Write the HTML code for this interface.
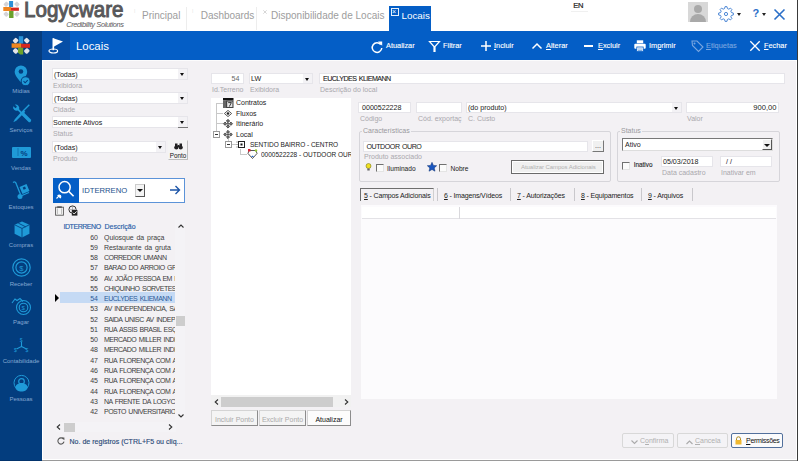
<!DOCTYPE html>
<html><head><meta charset="utf-8">
<style>
*{margin:0;padding:0;box-sizing:border-box}
html,body{width:798px;height:461px;overflow:hidden;background:#f3f1f4;font-family:"Liberation Sans",sans-serif;position:relative}
.a{position:absolute}
.t{position:absolute;white-space:nowrap;line-height:1}
svg{position:absolute;overflow:visible}
#hdr{left:0;top:0;width:798px;height:31px;background:#fff}
#bar{left:0;top:31px;width:797px;height:29px;background:#045ec6}
#bar1{left:0;top:31px;width:42px;height:29px;background:#053c7e}
#bar2{left:42px;top:31px;width:28px;height:29px;background:#064ea6}
#side{left:0;top:60px;width:42px;height:401px;background:#033d7e;border-bottom:1px solid #02336c}
#rb{left:797px;top:0;width:1px;height:461px;background:#3a3a3a}
#rw{left:796px;top:60px;width:1px;height:400px;background:#fff}
#bw{left:42px;top:459px;width:755px;height:1px;background:#fff}
#bg{left:42px;top:460px;width:755px;height:1px;background:#9a9a9a}
#tl{left:42px;top:60px;width:755px;height:1px;background:#fcfcfd}
.box{position:absolute;background:#fff;border:1px solid #e6e5ea}
.lbl{position:absolute;white-space:nowrap;line-height:1;font-size:7px;color:#a9a8ad}
.val{position:absolute;white-space:nowrap;line-height:1;font-size:7.1px;color:#222;margin-top:0.5px}
.dd{position:absolute;width:9px;background:#f3f2f5}
.dd:after{content:"";position:absolute;left:2.2px;top:50%;margin-top:-1px;border-left:2.7px solid transparent;border-right:2.7px solid transparent;border-top:3px solid #111}
.tb{position:absolute;white-space:nowrap;line-height:1;font-size:8px;color:#fff;-webkit-text-stroke:0.12px currentColor;transform:scaleX(0.92);transform-origin:0 0}
.tb u{text-decoration:underline}
.sl{position:absolute;left:0;width:42px;text-align:center;font-size:6px;color:#86a8d2;line-height:1}
.row{position:absolute;left:60px;width:115px;height:10px;font-size:7px;color:#3e3e3e;line-height:10px}
.row .n{position:absolute;right:77px;top:0}
.row .d{position:absolute;left:44px;top:0;white-space:nowrap;overflow:hidden;width:71px;letter-spacing:-0.5px;word-spacing:1px}
.row .d.lc{letter-spacing:-0.05px}
.btn{position:absolute;background:#f4f4f4;border:1px solid #d4d4d4;border-right-color:#8c8c8c;border-bottom-color:#8c8c8c;font-size:7px;text-align:center;line-height:13px;color:#aaa}
.tab{position:absolute;white-space:nowrap;line-height:1;font-size:7px;color:#222;letter-spacing:-0.15px}
.tsep{position:absolute;width:1px;background:#c9c8cc}
</style></head><body>
<div id="hdr" class="a"></div>
<div id="bar" class="a"></div>
<div id="bar1" class="a"></div>
<div id="bar2" class="a"></div>
<div id="side" class="a"></div>
<div id="tl" class="a"></div>
<div class="a" style="left:42px;top:60px;width:1px;height:400px;background:#fff"></div>
<div id="rb" class="a"></div>
<div id="rw" class="a"></div>
<div id="bw" class="a"></div>
<div id="bg" class="a"></div>

<!-- HEADER -->
<svg style="left:2px;top:0" width="20" height="20" viewBox="0 0 20 20">
 <g fill="#d4d4d8"><rect x="2.2" y="2" width="4" height="4.4" rx="1" transform="rotate(45 4.2 4.2)"/><rect x="13" y="2" width="4" height="4.4" rx="1" transform="rotate(-45 15 4.2)"/><rect x="2.2" y="12" width="4" height="4.4" rx="1" transform="rotate(-45 4.2 14.2)"/><rect x="13" y="12" width="4" height="4.4" rx="1" transform="rotate(45 15 14.2)"/></g>
 <rect x="7.1" y="1" width="4" height="6" fill="#2b8fd6"/>
 <rect x="1.3" y="7" width="7.8" height="4" fill="#f08620"/>
 <rect x="8.9" y="7.6" width="8" height="3.2" fill="#d8281f"/>
 <rect x="7.1" y="11" width="4.4" height="7" fill="#6aa12c"/>
</svg>
<div class="t" style="left:24px;top:-1.2px;font-size:22px;color:#58585a;-webkit-text-stroke:1px #58585a;transform:scaleX(0.935);transform-origin:0 0">Logycware</div>
<div class="t" style="left:66.2px;top:20.5px;font-size:7.4px;font-style:italic;color:#5a5a5c;letter-spacing:-0.36px">Credibility Solutions</div>

<div class="t" style="left:134px;top:9px;font-size:5px;color:#ccc">⁞</div>
<div class="t" style="left:142px;top:11px;font-size:10px;color:#9d9d9d">Principal</div>
<div class="a" style="left:186px;top:7px;width:1px;height:23px;background:#ededed"></div>
<div class="t" style="left:192px;top:9px;font-size:5px;color:#ccc">⁞</div>
<div class="t" style="left:200.8px;top:11px;font-size:10px;color:#9d9d9d;letter-spacing:-0.05px">Dashboards</div>
<div class="a" style="left:256px;top:7px;width:1px;height:23px;background:#ededed"></div>
<svg style="left:262.5px;top:10px" width="4" height="4" viewBox="0 0 4 4"><path d="M0.3 0.3l3.4 3.4M3.7 0.3L0.3 3.7" stroke="#c4c4c4" stroke-width="0.7"/></svg>
<div class="t" style="left:271px;top:11px;font-size:10px;color:#9d9d9d">Disponibilidade de Locais</div>
<div class="a" style="left:389px;top:6px;width:42px;height:25px;background:#045ec6"></div>
<div class="a" style="left:391px;top:8px;width:8px;height:8px;border:1px solid #e8f0fb"></div>
<div class="t" style="left:392px;top:8px;font-size:7px;color:#fff">×</div>
<div class="t" style="left:401.5px;top:11px;font-size:9.8px;color:#fff">Locais</div>
<div class="t" style="left:573.3px;top:1.5px;font-size:7.6px;color:#222;letter-spacing:-0.4px;-webkit-text-stroke:0.2px #222">EN</div>
<div class="a" style="left:571px;top:11px;width:17px;height:1px;background:#f0f0f0"></div>

<!-- avatar -->
<div class="a" style="left:688px;top:2px;width:20px;height:20px;background:#d8d8d8;overflow:hidden">
 <div class="a" style="left:6px;top:3px;width:8px;height:8px;border-radius:50%;background:#a9a9a9"></div>
 <div class="a" style="left:2px;top:12px;width:16px;height:12px;border-radius:8px 8px 0 0;background:#a9a9a9"></div>
</div>
<!-- gear -->
<svg style="left:718.3px;top:6px" width="16" height="16" viewBox="0 0 16 16"><path d="M7.01 0.67 L8.99 0.67 L9.44 2.59 L10.81 3.16 L12.49 2.12 L13.88 3.51 L12.84 5.19 L13.41 6.56 L15.33 7.01 L15.33 8.99 L13.41 9.44 L12.84 10.81 L13.88 12.49 L12.49 13.88 L10.81 12.84 L9.44 13.41 L8.99 15.33 L7.01 15.33 L6.56 13.41 L5.19 12.84 L3.51 13.88 L2.12 12.49 L3.16 10.81 L2.59 9.44 L0.67 8.99 L0.67 7.01 L2.59 6.56 L3.16 5.19 L2.12 3.51 L3.51 2.12 L5.19 3.16 L6.56 2.59Z" fill="none" stroke="#3a7ad0" stroke-width="0.9" stroke-linejoin="round"/><circle cx="8" cy="8" r="1.6" fill="none" stroke="#3a7ad0" stroke-width="0.9"/></svg>
<div class="a" style="left:737px;top:13px;border-left:2.5px solid transparent;border-right:2.5px solid transparent;border-top:3px solid #222"></div>
<div class="t" style="left:752.5px;top:8px;font-size:11px;font-weight:bold;color:#2b6fc8">?</div>
<div class="a" style="left:762px;top:13px;border-left:2.5px solid transparent;border-right:2.5px solid transparent;border-top:3px solid #222"></div>
<svg style="left:774px;top:9px" width="11" height="11" viewBox="0 0 11 11"><path d="M0.5 0.5L10.5 10.5M10.5 0.5L0.5 10.5" stroke="#2b6fc8" stroke-width="1.6"/></svg>

<!-- TITLE BAR -->
<svg style="left:10px;top:35px" width="22" height="21" viewBox="0 0 22 21">
 <g fill="#e4e4e8"><rect x="3.4" y="3.2" width="4.4" height="4.8" rx="1.2" transform="rotate(45 5.6 5.6)"/><rect x="14.6" y="3.2" width="4.4" height="4.8" rx="1.2" transform="rotate(-45 16.8 5.6)"/><rect x="3.4" y="13.6" width="4.4" height="4.8" rx="1.2" transform="rotate(-45 5.6 16)"/><rect x="14.6" y="13.6" width="4.4" height="4.8" rx="1.2" transform="rotate(45 16.8 16)"/></g>
 <rect x="8.8" y="1.2" width="4.4" height="7.4" fill="#2b93d8"/>
 <rect x="1.6" y="8.4" width="9.8" height="4.4" fill="#f0861e"/>
 <rect x="11.2" y="8.8" width="8.8" height="4" fill="#d9261c"/>
 <path d="M8 12.8h5.2v6.8H10l-2-2z" fill="#6fa22a"/>
</svg>
<svg style="left:48px;top:37px" width="18" height="17" viewBox="0 0 18 17">
 <path d="M5.3 1.2v12" stroke="#fff" stroke-width="1.6"/>
 <path d="M5.3 1.2L15 4.5 5.3 10z" fill="#fff"/>
 <ellipse cx="5.3" cy="14" rx="4.3" ry="2" fill="none" stroke="#fff" stroke-width="1.2"/>
</svg>
<div class="t" style="left:76px;top:40.5px;font-size:11.4px;color:#fff">Locais</div>

<!-- toolbar -->
<svg style="left:370.5px;top:40.5px" width="12" height="12" viewBox="0 0 12 12"><path d="M9.8 3.6A4.8 4.8 0 1 0 10.8 7" fill="none" stroke="#fff" stroke-width="1.5"/><path d="M7 0.6h4.2v4.2z" fill="#fff"/></svg>
<div class="tb" style="left:386px;top:41.5px">Atualizar</div>
<svg style="left:429px;top:41px" width="11" height="11" viewBox="0 0 11 11"><path d="M0.5 0.5h10L6 5.5v5H5v-5z" fill="none" stroke="#fff" stroke-width="1.2"/></svg>
<div class="tb" style="left:443px;top:41.5px">Filtrar</div>
<svg style="left:481px;top:41px" width="10" height="10" viewBox="0 0 10 10"><path d="M5 0v10M0 5h10" stroke="#fff" stroke-width="1.5"/></svg>
<div class="tb" style="left:494px;top:41.5px"><u>I</u>ncluir</div>
<svg style="left:532px;top:43px" width="10" height="6" viewBox="0 0 10 6"><path d="M0.5 5.5L5 1l4.5 4.5" fill="none" stroke="#fff" stroke-width="1.5"/></svg>
<div class="tb" style="left:546px;top:41.5px"><u>A</u>lterar</div>
<div class="a" style="left:584px;top:45px;width:9px;height:1.5px;background:#fff"></div>
<div class="tb" style="left:598px;top:41.5px"><u>E</u>xcluir</div>
<svg style="left:634px;top:40px" width="12" height="12" viewBox="0 0 12 12"><rect x="2.8" y="0.3" width="6.4" height="3" fill="#fff"/><rect x="0.3" y="3.8" width="11.4" height="5" rx="1" fill="#fff"/><rect x="2.8" y="7" width="6.4" height="4.6" fill="#fff" stroke="#045ec6" stroke-width="0.8"/><path d="M4 9h4M4 10.5h4" stroke="#045ec6" stroke-width="0.5"/></svg>
<div class="tb" style="left:649px;top:41.5px">Im<u>p</u>rimir</div>
<svg style="left:691px;top:40px" width="13" height="12" viewBox="0 0 13 12"><path d="M1 1h5l6 6-4.5 4.5-6-6z" fill="none" stroke="#7aa6e0" stroke-width="1.1"/><circle cx="3.5" cy="3.5" r="1" fill="#7aa6e0"/></svg>
<div class="tb" style="left:706px;top:41.5px;color:#7aa6e0"><u>E</u>tiquetas</div>
<svg style="left:750px;top:41px" width="10" height="10" viewBox="0 0 10 10"><path d="M0.3 0.3l9.4 9.4M9.7 0.3l-9.4 9.4" stroke="#fff" stroke-width="1.3"/></svg>
<div class="tb" style="left:764px;top:41.5px"><u>F</u>echar</div>

<!-- SIDEBAR -->
<!-- sidebar icons -->
<svg style="left:13.5px;top:65px" width="17" height="22" viewBox="0 0 16 21"><path d="M6.5 0.5a6 6 0 0 1 6 6c0 4-6 10-6 10s-6-6-6-10a6 6 0 0 1 6-6z" fill="#1f9ad8"/><circle cx="6.5" cy="6.2" r="2.2" fill="#033d7e"/><circle cx="11" cy="15.5" r="4.3" fill="#1f9ad8" stroke="#033d7e" stroke-width="1"/><path d="M9 15.5l1.5 1.5 2.5-2.5" fill="none" stroke="#033d7e" stroke-width="1"/></svg>
<svg style="left:12px;top:104px" width="19" height="19" viewBox="0 0 19 19"><path d="M1.2 2.2a3.6 3.6 0 0 0 4.6 4.4L16.5 17.3l1.3-1.3L7.1 5.3A3.6 3.6 0 0 0 2.8 0.6L5 2.8 3.6 4.2z" fill="#1f9ad8"/><path d="M17.8 1.2l-1-1-5.5 5.5 1 1zM11.3 5.7l2 2-9 9-3 1.5 1.5-3z" fill="#1f9ad8"/><path d="M10.5 9.5l7 7" stroke="#1f9ad8" stroke-width="3.2" stroke-linecap="round"/></svg>
<svg style="left:12px;top:147px" width="19" height="11" viewBox="0 0 19 11"><rect x="0" y="0" width="19" height="11" rx="1" fill="#1f9ad8"/><path d="M6 1.5v8" stroke="#033d7e" stroke-width="0.8" stroke-dasharray="1 1"/><text x="8.5" y="8.8" font-family="Liberation Sans" font-size="8" font-weight="bold" fill="#033d7e">%</text></svg>
<svg style="left:12px;top:181px" width="18" height="19" viewBox="0 0 18 19"><path d="M1 1.5c2-1.5 3 0 3.5 2l4 10" fill="none" stroke="#1f9ad8" stroke-width="1.3"/><circle cx="8" cy="15.5" r="2.5" fill="#1f9ad8"/><path d="M7.5 6l7-3 3 7-7 3z" fill="#1f9ad8"/><rect x="11" y="6" width="2.5" height="2.5" fill="#033d7e" transform="rotate(-22 12 7)"/><path d="M10 14.5l7-3" stroke="#1f9ad8" stroke-width="1.2"/></svg>
<svg style="left:13.5px;top:221px" width="16" height="17" viewBox="0 0 15 16"><path d="M7.5 0.5l7 3v8.5l-7 3.5-7-3.5V3.5z" fill="#1f9ad8"/><path d="M0.5 3.5l7 3.5 7-3.5M7.5 7v8.5M4 2l7 3.5" fill="none" stroke="#033d7e" stroke-width="0.8"/></svg>
<svg style="left:12px;top:258px" width="19" height="19" viewBox="0 0 19 19"><circle cx="9.5" cy="9.5" r="8.7" fill="none" stroke="#1f9ad8" stroke-width="1.2"/><circle cx="9.5" cy="9.5" r="5.6" fill="none" stroke="#1f9ad8" stroke-width="1.2"/><text x="7.3" y="12.5" font-family="Liberation Sans" font-size="7.5" fill="#1f9ad8">$</text></svg>
<svg style="left:11px;top:297px" width="20" height="18" viewBox="0 0 20 18"><circle cx="12.5" cy="10.5" r="7" fill="none" stroke="#1f9ad8" stroke-width="1.1"/><circle cx="12.5" cy="10.5" r="4.3" fill="none" stroke="#1f9ad8" stroke-width="1.1"/><text x="10.5" y="13.3" font-family="Liberation Sans" font-size="6" fill="#1f9ad8">$</text><path d="M1 6l3-4 2 1.5 3-2 3 3" fill="none" stroke="#1f9ad8" stroke-width="1.1"/></svg>
<svg style="left:14px;top:337px" width="15" height="15" viewBox="0 0 15 15"><path d="M7.5 5v4.5L2.5 12M7.5 9.5l5 2.5" fill="none" stroke="#1f9ad8" stroke-width="1.1"/><text x="5.8" y="5" font-family="Liberation Sans" font-size="5" fill="#1f9ad8">$</text><text x="0" y="14.5" font-family="Liberation Sans" font-size="5" fill="#1f9ad8">$</text><text x="11.5" y="14.5" font-family="Liberation Sans" font-size="5" fill="#1f9ad8">$</text></svg>
<svg style="left:13px;top:375px" width="17" height="17" viewBox="0 0 17 17"><path d="M3 13A7.5 7.5 0 1 1 14 13" fill="none" stroke="#1f9ad8" stroke-width="1"/><circle cx="8.5" cy="6.5" r="2.8" fill="none" stroke="#1f9ad8" stroke-width="1.2"/><path d="M2.5 12.5c0-3 3-4.5 6-4.5s6 1.5 6 4.5c0 2.5-3 4-6 4s-6-1.5-6-4z" fill="#1f9ad8"/></svg>
<div class="sl" style="top:88px">Mídias</div>
<div class="sl" style="top:127px">Serviços</div>
<div class="sl" style="top:165px">Vendas</div>
<div class="sl" style="top:203.7px">Estoques</div>
<div class="sl" style="top:241.7px">Compras</div>
<div class="sl" style="top:280.8px">Receber</div>
<div class="sl" style="top:319px">Pagar</div>
<div class="sl" style="top:358px">Contabilidade</div>
<div class="sl" style="top:396px">Pessoas</div>

<!-- LEFT FILTERS -->
<div class="box" style="left:52px;top:68.2px;width:136px;height:11.6px"></div>
<div class="dd" style="left:178px;top:69.2px;height:9.6px"></div>
<div class="val" style="left:54px;top:71px">(Todas)</div>
<div class="lbl" style="left:53px;top:82px">Exibidora</div>

<div class="box" style="left:52px;top:92.2px;width:136px;height:11.6px"></div>
<div class="dd" style="left:178px;top:93.2px;height:9.6px"></div>
<div class="val" style="left:54px;top:95px">(Todas)</div>
<div class="lbl" style="left:53px;top:106px">Cidade</div>

<div class="box" style="left:52px;top:116.2px;width:136px;height:11.6px"></div>
<div class="dd" style="left:178px;top:117.2px;height:9.6px"></div>
<div class="a" style="left:178px;top:127px;width:10px;height:1px;background:#777"></div>
<div class="val" style="left:53px;top:119px">Somente Ativos</div>
<div class="lbl" style="left:53px;top:130px">Status</div>

<div class="box" style="left:52px;top:141.2px;width:114px;height:11.6px"></div>
<div class="dd" style="left:156px;top:142.2px;height:9.6px"></div>
<div class="val" style="left:54px;top:144px">(Todas)</div>
<div class="lbl" style="left:53px;top:155px">Produto</div>
<div class="btn" style="left:168px;top:140px;width:20px;height:20px;color:#222;font-size:6.3px;line-height:1;padding-top:11.5px;border-color:#f4f4f4;border-right-color:#bdbdbd;border-bottom-color:#bdbdbd;color:#111">Ponto</div>

<!-- search -->
<div class="a" style="left:53px;top:178px;width:132px;height:25px;background:#fff;border:1px solid #5b93d8"></div>
<div class="a" style="left:53px;top:178px;width:26px;height:25px;background:#045ec6"></div>
<div class="t" style="left:82px;top:186.5px;font-size:7.7px;color:#24508c">IDTERRENO</div>
<div class="a" style="left:135px;top:184px;width:10px;height:13px;background:#f4f4f4;border:1px solid #ccc;border-right-color:#555;border-bottom-color:#555"></div>
<div class="a" style="left:137px;top:189px;border-left:3px solid transparent;border-right:3px solid transparent;border-top:3px solid #111"></div>
<svg style="left:53px;top:178px" width="24" height="24" viewBox="0 0 24 24"><circle cx="11.6" cy="9.2" r="5.6" fill="none" stroke="#fff" stroke-width="1.5"/><path d="M15.6 13.2l5 5" stroke="#fff" stroke-width="1.6"/><path d="M3.5 20.5l2.8-2.8M5 17.5a1.6 1.6 0 1 1 2.3 2.3z" stroke="#fff" stroke-width="1.1" fill="#fff"/></svg>
<svg style="left:170px;top:185px" width="11" height="10" viewBox="0 0 11 10"><path d="M0 5h9.5M5.5 1l4 4-4 4" fill="none" stroke="#1d56a8" stroke-width="1.4"/></svg>
<!-- ponto binoculars -->
<svg style="left:174px;top:143px" width="9" height="7" viewBox="0 0 9 7"><circle cx="2.3" cy="4.5" r="2.1" fill="#222"/><circle cx="6.7" cy="4.5" r="2.1" fill="#222"/><rect x="1" y="0.5" width="2.5" height="3" fill="#222"/><rect x="5.5" y="0.5" width="2.5" height="3" fill="#222"/><rect x="3.5" y="2" width="2" height="2" fill="#222"/></svg>

<!-- GRID -->
<div class="t" style="left:63.5px;top:222.5px;font-size:7px;color:#2a5ea8;letter-spacing:-0.45px;-webkit-text-stroke:0.15px #2a5ea8">IDTERRENO</div>
<div class="t" style="left:104.5px;top:222.5px;font-size:7px;color:#2a5ea8;-webkit-text-stroke:0.15px #2a5ea8">Descrição</div>
<!-- selection -->
<div class="a" style="left:60px;top:292.3px;width:115px;height:10.4px;background:#c5daf4"></div>
<div class="a" style="left:55px;top:294px;border-top:4px solid transparent;border-bottom:4px solid transparent;border-left:4px solid #000"></div>
<!-- v scroll -->
<div class="a" style="left:175px;top:220px;width:10px;height:200px;background:#f4f3f6"></div>
<div class="a" style="left:176px;top:316px;width:9px;height:10px;background:#cdcdcd"></div>
<svg style="left:178px;top:224px" width="6" height="4" viewBox="0 0 6 4"><path d="M0.5 3.5L3 1l2.5 2.5" fill="none" stroke="#333" stroke-width="1.1"/></svg>
<svg style="left:178px;top:414px" width="6" height="4" viewBox="0 0 6 4"><path d="M0.5 0.5L3 3l2.5-2.5" fill="none" stroke="#333" stroke-width="1.1"/></svg>
<!-- h scroll -->
<div class="a" style="left:56px;top:422px;width:120px;height:10px;background:#f4f3f6"></div>
<div class="a" style="left:64px;top:423px;width:11px;height:9px;background:#cdcdcd"></div>
<svg style="left:56px;top:424px" width="5" height="6" viewBox="0 0 5 6"><path d="M4 0.5L1.2 3 4 5.5" fill="none" stroke="#333" stroke-width="1.1"/></svg>
<svg style="left:168px;top:424px" width="5" height="6" viewBox="0 0 5 6"><path d="M1 0.5L3.8 3 1 5.5" fill="none" stroke="#333" stroke-width="1.1"/></svg>
<svg style="left:57px;top:437px" width="8" height="8" viewBox="0 0 8 8"><path d="M6.6 2.3A3.1 3.1 0 1 0 7 4.7" fill="none" stroke="#555" stroke-width="1.1"/><path d="M4.6 0.4h2.8v2.8z" fill="#555"/></svg>
<div class="t" style="left:69.5px;top:438px;font-size:7px;color:#2b4b78;-webkit-text-stroke:0.15px #2b4b78;letter-spacing:0.02px">No. de registros (CTRL+F5 ou cliq...</div>
<!-- grid small icons -->
<svg style="left:54.5px;top:205.5px" width="9" height="10" viewBox="0 0 9 10"><rect x="0.6" y="1.2" width="7.8" height="8" fill="#f4f4f4" stroke="#555" stroke-width="0.9"/><rect x="2.2" y="0.3" width="4.6" height="1.6" fill="#555"/><path d="M2.5 2.5v5.5M6.5 2.5v5.5" stroke="#aaa" stroke-width="0.7"/></svg>
<svg style="left:67.5px;top:205px" width="10" height="11" viewBox="0 0 10 11"><circle cx="4.5" cy="4.5" r="3.6" fill="none" stroke="#333" stroke-width="1"/><path d="M2 4.5h5M4.5 1v7" stroke="#777" stroke-width="0.5"/><rect x="3.8" y="5" width="5.6" height="5.6" fill="#222"/><path d="M4.8 7.6l1.4 1.4 2.4-2.6" stroke="#fff" stroke-width="0.9" fill="none"/></svg>
<div id="rows">
<div class="row" style="top:232.60px"><span class="n">60</span><span class="d lc">Quiosque da praça</span></div>
<div class="row" style="top:242.86px"><span class="n">59</span><span class="d lc">Restaurante da gruta</span></div>
<div class="row" style="top:253.12px"><span class="n">58</span><span class="d">CORREDOR UMANN</span></div>
<div class="row" style="top:263.38px"><span class="n">57</span><span class="d">BARAO DO ARROIO GRANDE</span></div>
<div class="row" style="top:273.64px"><span class="n">56</span><span class="d">AV. JOÃO PESSOA EM FRENTE</span></div>
<div class="row" style="top:283.90px"><span class="n">55</span><span class="d">CHIQUINHO SORVETES</span></div>
<div class="row" style="top:294.16px;color:#2d5a98"><span class="n">54</span><span class="d">EUCLYDES KLIEMANN</span></div>
<div class="row" style="top:304.42px"><span class="n">53</span><span class="d">AV INDEPENDENCIA, SAIDA</span></div>
<div class="row" style="top:314.68px"><span class="n">52</span><span class="d">SAIDA UNISC AV INDEPENDENCIA</span></div>
<div class="row" style="top:324.94px"><span class="n">51</span><span class="d">RUA ASSIS BRASIL ESQUINA</span></div>
<div class="row" style="top:335.20px"><span class="n">50</span><span class="d">MERCADO MILLER INDIO</span></div>
<div class="row" style="top:345.46px"><span class="n">48</span><span class="d">MERCADO MILLER INDIO</span></div>
<div class="row" style="top:355.72px"><span class="n">47</span><span class="d">RUA FLORENÇA COM AV</span></div>
<div class="row" style="top:365.98px"><span class="n">46</span><span class="d">RUA FLORENÇA COM AV</span></div>
<div class="row" style="top:376.24px"><span class="n">45</span><span class="d">RUA FLORENÇA COM AV</span></div>
<div class="row" style="top:386.50px"><span class="n">44</span><span class="d">RUA FLORENÇA COM AV</span></div>
<div class="row" style="top:396.76px"><span class="n">43</span><span class="d">NA FRENTE DA LOGYCWARE</span></div>
<div class="row" style="top:407.02px"><span class="n">42</span><span class="d">POSTO UNIVERSITARIO</span></div>
</div>

<!-- MAIN TOP -->
<div class="box" style="left:211px;top:72.5px;width:33px;height:11.8px"></div>
<div class="val" style="left:231.5px;top:75.5px;color:#666">54</div>
<div class="lbl" style="left:212px;top:86px">Id.Terreno</div>
<div class="box" style="left:249px;top:72.5px;width:64px;height:11.8px"></div>
<div class="dd" style="left:303px;top:74px;height:9px"></div>
<div class="val" style="left:251px;top:75.5px">LW</div>
<div class="lbl" style="left:250px;top:86px">Exibidora</div>
<div class="box" style="left:318.5px;top:72.5px;width:466px;height:11.8px"></div>
<div class="val" style="left:323px;top:75.5px;letter-spacing:-0.55px;word-spacing:1px;-webkit-text-stroke:0.1px #222">EUCLYDES KLIEMANN</div>
<div class="lbl" style="left:320px;top:86px">Descrição do local</div>

<!-- TREE -->
<div class="a" style="left:211px;top:98px;width:140px;height:297px;background:#fff"></div>
<!-- tree lines -->
<div class="a" style="left:216px;top:103px;width:1px;height:31px;border-left:1px solid #c8c8c8"></div>
<div class="a" style="left:217px;top:103px;width:6px;height:1px;border-top:1px solid #c8c8c8"></div>
<div class="a" style="left:217px;top:113px;width:6px;height:1px;border-top:1px solid #c8c8c8"></div>
<div class="a" style="left:217px;top:123px;width:6px;height:1px;border-top:1px solid #c8c8c8"></div>
<div class="a" style="left:228px;top:139px;width:1px;height:5px;border-left:1px solid #c8c8c8"></div>
<div class="a" style="left:240px;top:149px;width:1px;height:6px;border-left:1px solid #c8c8c8"></div>
<div class="a" style="left:240px;top:154px;width:7px;height:1px;border-top:1px solid #c8c8c8"></div>
<!-- expand boxes -->
<div class="a" style="left:213px;top:131px;width:7px;height:7px;border:1px solid #9a9a9a;background:#fff"><div class="a" style="left:1px;top:2px;width:3px;height:1px;background:#333"></div></div>
<div class="a" style="left:225px;top:141px;width:7px;height:7px;border:1px solid #9a9a9a;background:#fff"><div class="a" style="left:1px;top:2px;width:3px;height:1px;background:#333"></div></div>
<div class="a" style="left:232px;top:144px;width:4px;height:1px;border-top:1px solid #c8c8c8"></div>
<!-- icons -->
<svg style="left:223px;top:98px" width="11" height="10" viewBox="0 0 11 10"><rect x="0" y="0" width="10.5" height="2.5" fill="#111"/><rect x="0" y="2.5" width="3" height="7.5" fill="#666"/><rect x="3" y="2.5" width="7.5" height="7.5" fill="#444"/><rect x="4.2" y="3.6" width="5.2" height="5.4" fill="#e6e6e6"/><path d="M5.2 4.6h3.2L6.3 8.6" fill="none" stroke="#222" stroke-width="0.9"/></svg>
<svg style="left:223.5px;top:110px" width="8" height="7" viewBox="0 0 8 7"><path d="M4 0.4L7.6 3.5 4 6.6 0.4 3.5z" fill="#fff" stroke="#444" stroke-width="0.9"/><circle cx="4" cy="3.5" r="1.3" fill="#222"/></svg>
<svg style="left:223px;top:119px" width="10" height="10" viewBox="0 0 11 11"><g fill="#777" stroke="#222" stroke-width="0.8"><path d="M5.5 0.4l1.8 1.8-1.8 1.8-1.8-1.8zM5.5 6.4l1.8 1.8-1.8 1.8-1.8-1.8zM2.3 3.4l1.8 1.8-1.8 1.8L0.5 5.2zM8.7 3.4l1.8 1.8-1.8 1.8-1.8-1.8z"/></g><path d="M4.3 5.2h2.4M5.5 4v2.4" stroke="#333" stroke-width="0.8"/></svg>
<svg style="left:223px;top:129.5px" width="10" height="9.5" viewBox="0 0 11 11"><g fill="#777" stroke="#222" stroke-width="0.8"><path d="M5.5 0.4l1.8 1.8-1.8 1.8-1.8-1.8zM5.5 6.4l1.8 1.8-1.8 1.8-1.8-1.8zM2.3 3.4l1.8 1.8-1.8 1.8L0.5 5.2zM8.7 3.4l1.8 1.8-1.8 1.8-1.8-1.8z"/></g><path d="M4.3 5.2h2.4M5.5 4v2.4" stroke="#333" stroke-width="0.8"/></svg>
<svg style="left:235.5px;top:140.5px" width="9" height="7" viewBox="0 0 9 7"><rect x="2.5" y="0.5" width="6" height="6" fill="#fff" stroke="#222" stroke-width="1"/><path d="M0 1h2M0 3.5h2M0 6h2" stroke="#999" stroke-width="0.8"/><rect x="4.5" y="2.5" width="2" height="2" fill="#111"/></svg>
<svg style="left:247px;top:148px" width="11" height="11" viewBox="0 0 11 11"><path d="M2 2.5h7l1 3-4.5 5L1 5.5z" fill="#fff" stroke="#444" stroke-width="0.9"/><rect x="1" y="1" width="2.5" height="2.5" fill="#d23"/><circle cx="9" cy="2.5" r="1.2" fill="#9c3"/><path d="M4 9l1.5-1.5L7 9z" fill="#2a6ac8"/></svg>
<div class="t" style="left:236px;top:99px;font-size:7px;color:#222">Contratos</div>
<div class="t" style="left:236px;top:110px;font-size:7px;color:#222">Fluxos</div>
<div class="t" style="left:236px;top:120px;font-size:7px;color:#222">Itinerário</div>
<div class="t" style="left:236px;top:130.5px;font-size:7px;color:#222">Local</div>
<div class="t" style="left:250px;top:141.5px;font-size:6.5px;color:#222;letter-spacing:-0.03px">SENTIDO BAIRRO - CENTRO</div>
<div class="a" style="left:261px;top:148px;width:90px;height:12px;overflow:hidden"><div class="t" style="left:0;top:3.7px;font-size:6.5px;color:#222">0000522228 - OUTDOOR OURO</div></div>
<!-- tree scrollbar -->
<div class="a" style="left:211px;top:395px;width:140px;height:12px;background:#f1f1f1"></div>
<div class="a" style="left:221px;top:397px;width:112px;height:9.5px;background:#cdcdcd"></div>
<svg style="left:214px;top:399px" width="5" height="6" viewBox="0 0 5 6"><path d="M4 0.5L1.2 3 4 5.5" fill="none" stroke="#333" stroke-width="1.1"/></svg>
<svg style="left:344px;top:399px" width="5" height="6" viewBox="0 0 5 6"><path d="M1 0.5L3.8 3 1 5.5" fill="none" stroke="#333" stroke-width="1.1"/></svg>
<div class="btn" style="left:211px;top:410px;width:47px;height:16px;line-height:15px;padding-top:1px">Incluir Ponto</div>
<div class="btn" style="left:259px;top:410px;width:47px;height:16px;line-height:15px;padding-top:1px">Excluir Ponto</div>
<div class="btn" style="left:307px;top:410px;width:44px;height:16px;line-height:15px;padding-top:1px;color:#111;background:#fcfcfc">Atualizar</div>

<!-- RIGHT PANEL -->
<div class="box" style="left:358px;top:101.5px;width:53px;height:11.8px"></div>
<div class="val" style="left:362px;top:104px">0000522228</div>
<div class="lbl" style="left:360px;top:115px">Código</div>
<div class="box" style="left:416px;top:101.5px;width:46px;height:11.8px"></div>
<div class="lbl" style="left:418px;top:115px">Cód. exportaç</div>
<div class="box" style="left:466px;top:101.5px;width:216px;height:11.8px"></div>
<div class="dd" style="left:672px;top:103px;height:9px"></div>
<div class="val" style="left:468px;top:104px">(do produto)</div>
<div class="lbl" style="left:468px;top:115px">C. Custo</div>
<div class="box" style="left:686px;top:101.5px;width:93px;height:11.8px"></div>
<div class="val" style="left:753.3px;top:103.7px;font-size:7.6px">900,00</div>
<div class="lbl" style="left:687px;top:115px">Valor</div>

<!-- Caracteristicas group -->
<div class="a" style="left:359px;top:131px;width:252px;height:51px;border:1px solid #d6d5da;border-radius:2px"></div>
<div class="t" style="left:362px;top:127px;font-size:7px;color:#9a999e;background:#f3f1f4;padding:0 1px">Características</div>
<div class="box" style="left:363px;top:141px;width:225px;height:11px"></div>
<div class="val" style="left:366.5px;top:143px;letter-spacing:-0.45px;word-spacing:0.8px">OUTDOOR OURO</div>
<div class="btn" style="left:592px;top:140px;width:12px;height:12px;line-height:10px;color:#333;border-color:#fff;border-right-color:#777;border-bottom-color:#777;background:#f0f0f0">...</div>
<div class="lbl" style="left:364px;top:153px">Produto associado</div>
<svg style="left:365px;top:163px" width="7" height="8" viewBox="0 0 7 8"><circle cx="3.5" cy="3" r="2.5" fill="#f0e020" stroke="#7a7a20" stroke-width="0.6"/><rect x="2.3" y="5.5" width="2.4" height="2" fill="#666"/></svg>
<div class="a" style="left:375.5px;top:164px;width:8px;height:8px;border:1px solid #e4e4e4;border-top-color:#707070;border-left-color:#707070;background:#fbfbfb"></div>
<div class="t" style="left:387px;top:165.5px;font-size:6.6px;color:#222">Iluminado</div>
<svg style="left:427px;top:162px" width="10" height="10" viewBox="0 0 10 10"><path d="M5 0.3l1.4 3.1 3.3.3-2.5 2.2.8 3.3L5 7.5 2 9.2l.8-3.3L.3 3.7l3.3-.3z" fill="#1a56c0" stroke="#0b2e70" stroke-width="0.5"/></svg>
<div class="a" style="left:439px;top:164px;width:8px;height:8px;border:1px solid #e4e4e4;border-top-color:#707070;border-left-color:#707070;background:#fbfbfb"></div>
<div class="t" style="left:450.5px;top:165.5px;font-size:6.6px;color:#222">Nobre</div>
<div class="a" style="left:511px;top:160px;width:93px;height:14px;border:1px solid #6a6a6a;background:#f0f0f0"><div class="a" style="left:0;top:0;right:0;bottom:0;border:1px solid #fff"></div></div>
<div class="t" style="left:521px;top:164px;font-size:6px;color:#b0b0b0;letter-spacing:-0.05px">Atualizar Campos Adicionais</div>

<!-- Status group -->
<div class="a" style="left:617px;top:131px;width:163px;height:51px;border:1px solid #d6d5da;border-radius:2px"></div>
<div class="t" style="left:620px;top:127px;font-size:7px;color:#9a999e;background:#f3f1f4;padding:0 1px">Status</div>
<div class="a" style="left:622px;top:138px;width:151px;height:13px;background:#fff;border:1px solid #777;border-right-color:#ddd;border-bottom-color:#ddd"></div>
<div class="a" style="left:762px;top:139px;width:10px;height:11px;background:#f0f0f0;border:1px solid #fff;border-right-color:#555;border-bottom-color:#555"></div>
<div class="a" style="left:764px;top:144px;border-left:3px solid transparent;border-right:3px solid transparent;border-top:3px solid #111"></div>
<div class="val" style="left:625px;top:141px">Ativo</div>
<div class="a" style="left:622px;top:161.5px;width:8px;height:8px;border:1px solid #e4e4e4;border-top-color:#707070;border-left-color:#707070;background:#fbfbfb"></div>
<div class="t" style="left:633.7px;top:162px;font-size:6.4px;color:#222;-webkit-text-stroke:0.1px #222">Inativo</div>
<div class="box" style="left:661px;top:156px;width:52px;height:11px"></div>
<div class="val" style="left:663px;top:158px">05/03/2018</div>
<div class="lbl" style="left:662px;top:169px">Data cadastro</div>
<div class="box" style="left:720px;top:156px;width:52px;height:11px"></div>
<div class="val" style="left:726px;top:158px">/ /</div>
<div class="lbl" style="left:721px;top:169px">Inativar em</div>

<!-- tabs -->
<div class="a" style="left:359.5px;top:188px;width:74px;height:13px;border:1px solid #d0d0d0;border-top-color:#6e6e6e;border-left-color:#6e6e6e;border-bottom:none"></div>
<div class="tab" style="left:364px;top:192px"><u>5</u> - Campos Adicionais</div>
<div class="tsep" style="left:437px;top:188px;height:13px"></div>
<div class="tab" style="left:444px;top:192px"><u>6</u> - Imagens/Vídeos</div>
<div class="tsep" style="left:510px;top:188px;height:13px"></div>
<div class="tab" style="left:517px;top:192px"><u>7</u> - Autorizações</div>
<div class="tsep" style="left:574px;top:188px;height:13px"></div>
<div class="tab" style="left:581px;top:192px"><u>8</u> - Equipamentos</div>
<div class="tsep" style="left:641px;top:188px;height:13px"></div>
<div class="tab" style="left:648px;top:192px"><u>9</u> - Arquivos</div>
<div class="tsep" style="left:692px;top:188px;height:13px"></div>
<!-- tab content grid -->
<div class="a" style="left:361px;top:205px;width:416px;height:194px;background:#fcfbfd"></div>
<div class="a" style="left:362px;top:207px;width:414px;height:12px;background:#fff;border-bottom:1px solid #e3e2e6"></div>
<div class="a" style="left:459px;top:207px;width:1px;height:12px;background:#d9d8dc"></div>

<!-- bottom buttons -->
<div class="a" style="left:622px;top:433px;width:52px;height:15px;border:1px solid #d8d8d8;border-radius:2px;background:#f4f3f6"></div>
<svg style="left:631px;top:440px" width="7" height="5" viewBox="0 0 7 5"><path d="M0.5 0.5L3.5 3.5 6.5 0.5" fill="none" stroke="#aaa" stroke-width="1.1"/></svg>
<div class="t" style="left:640px;top:437px;font-size:7px;color:#b0b0b0">C<u>o</u>nfirma</div>
<div class="a" style="left:677px;top:433px;width:51px;height:15px;border:1px solid #d8d8d8;border-radius:2px;background:#f4f3f6"></div>
<svg style="left:686px;top:440px" width="7" height="5" viewBox="0 0 7 5"><path d="M0.5 4L3.5 1 6.5 4" fill="none" stroke="#aaa" stroke-width="1.1"/></svg>
<div class="t" style="left:695px;top:437px;font-size:7px;color:#b0b0b0"><u>C</u>ancela</div>
<div class="a" style="left:731px;top:433px;width:52px;height:15px;border:1.5px solid #52709c;border-radius:2px;background:#fbfbfc"></div>
<svg style="left:735px;top:436px" width="7" height="9" viewBox="0 0 7 9"><path d="M1.5 4V2.8a2 2 0 0 1 4 0V4" fill="none" stroke="#b08a20" stroke-width="1"/><rect x="0.5" y="4" width="6" height="4.5" fill="#f0b830"/></svg>
<div class="t" style="left:746px;top:437px;font-size:7px;color:#111;letter-spacing:-0.3px"><u>P</u>ermissões</div>

</body></html>
